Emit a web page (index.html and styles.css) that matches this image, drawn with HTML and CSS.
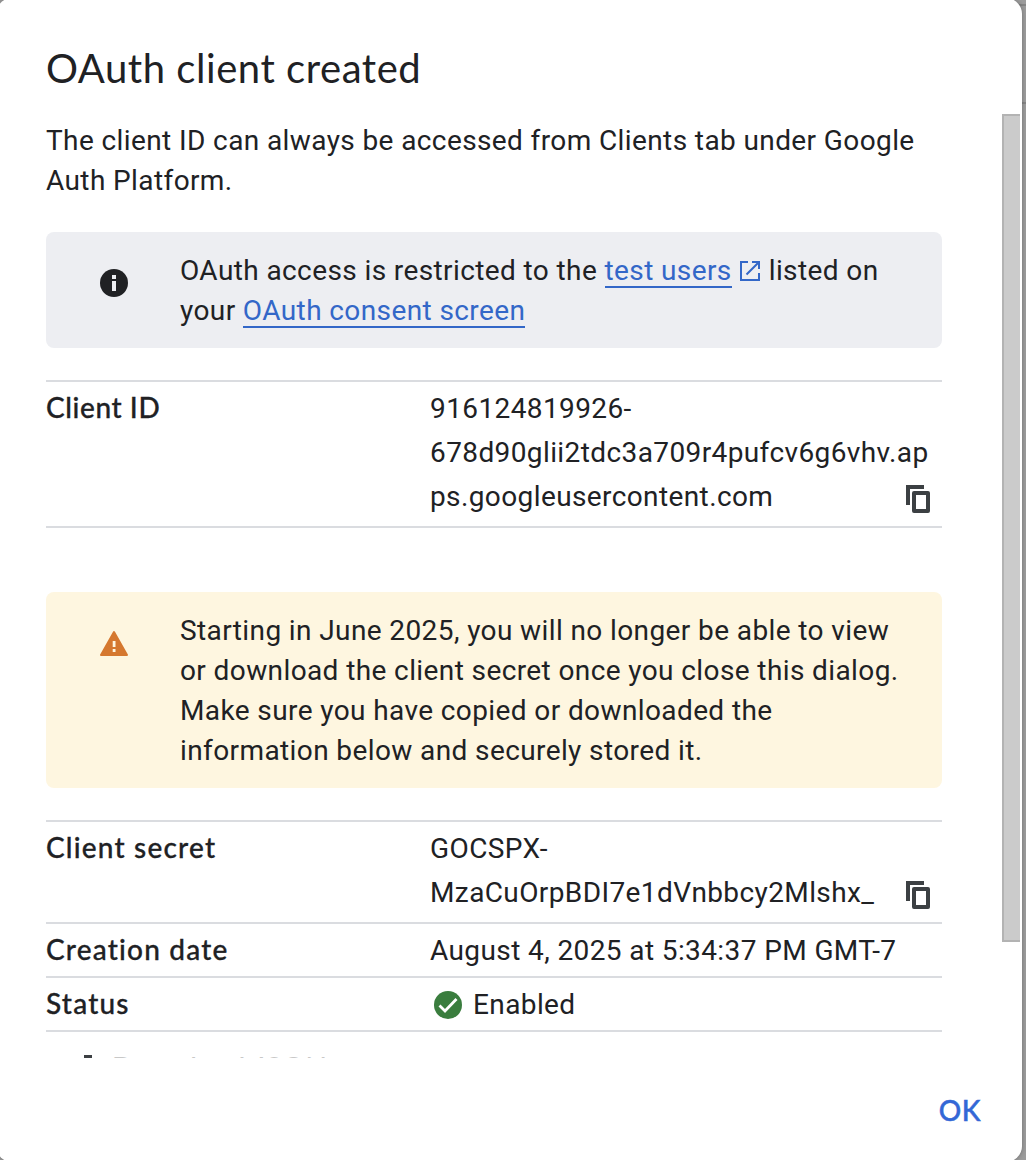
FILE: index.html
```html
<!DOCTYPE html>
<html lang="en">
<head>
<meta charset="utf-8">
<title>OAuth client created</title>
<link rel="stylesheet" href="styles.css">
</head>
<body>
<div class="dialog">
  <h1 class="title">OAuth client created</h1>
  <div class="scroller">
    <div class="content">
      <p class="intro">The client ID can always be accessed from Clients tab under Google<br>Auth Platform.</p>
      <div class="notice info">
        <svg class="notice-icon" viewBox="0 0 28 28"><circle cx="14" cy="14" r="14" fill="#202124"/><path d="M12 6h4v4h-4zM12 12h4v10h-4z" fill="#edeef2"/></svg>
        <p class="notice-text">OAuth access is restricted to the <a class="link">test users</a><svg class="external" viewBox="0 0 20 20" fill="none" stroke="#3367c8" stroke-width="2"><path d="M8 1H1v18h18v-7M12 1h7v7M19 1L6.500 13.500"/></svg>listed on<br>your <a class="link">OAuth consent screen</a></p>
      </div>
      <dl class="details">
        <div class="row">
          <dt class="tight">Client ID</dt>
          <dd>916124819926-<br>678d90glii2tdc3a709r4pufcv6g6vhv.ap<br>ps.googleusercontent.com</dd>
          <svg class="copy" viewBox="0 0 24 28" fill="none" stroke="#3c4043" stroke-width="4"><path d="M18 2H2v18"/><rect x="8" y="8" width="14" height="18" stroke-linejoin="round"/></svg>
        </div>
      </dl>
      <div class="notice warning">
        <svg class="notice-icon" viewBox="0 0 28 28"><path d="M14 3L27 26H1z" fill="#d5782f" stroke="#d5782f" stroke-width="2" stroke-linejoin="round"/><path d="M12.700 12h2.800v6h-2.800zM12.700 20h2.800v3h-2.800z" fill="#fef6e0"/></svg>
        <p class="notice-text">Starting in June 2025, you will no longer be able to view<br>or download the client secret once you close this dialog.<br>Make sure you have copied or downloaded the<br>information below and securely stored it.</p>
      </div>
      <dl class="details">
        <div class="row">
          <dt>Client secret</dt>
          <dd>GOCSPX-<br>MzaCuOrpBDI7e1dVnbbcy2Mlshx_</dd>
          <svg class="copy" viewBox="0 0 24 28" fill="none" stroke="#3c4043" stroke-width="4"><path d="M18 2H2v18"/><rect x="8" y="8" width="14" height="18" stroke-linejoin="round"/></svg>
        </div>
        <div class="row short"><dt>Creation date</dt><dd>August 4, 2025 at 5:34:37 PM GMT-7</dd></div>
        <div class="row short"><dt>Status</dt><dd class="status"><svg class="check" viewBox="0 0 28 28"><circle cx="14" cy="14" r="14" fill="#3a7d3e"/><path d="M5.500 14.500l5.500 5.500L22.500 8" fill="none" stroke="#fff" stroke-width="2.800"/></svg>Enabled</dd></div>
      </dl>
      <div class="download"><svg class="download-icon" viewBox="0 0 24 28"><path d="M8 0h8v10h6L12 20 2 10h6zM2 24h20v4H2z" fill="#3c4043"/></svg><span>Download JSON</span></div>
    </div>
    <div class="scrollbar"><div class="thumb"></div></div>
  </div>
  <div class="actions"><button class="ok">OK</button></div>
</div>
</body>
</html>
```
FILE: styles.css
```css
* { box-sizing: border-box; }
html, body { margin: 0; height: 1160px; overflow: hidden; }
body {
  background: linear-gradient(transparent 4px, #858585 4px 6px, transparent 6px 102px, #858585 102px 104px, transparent 104px), #9c9c9c;
  font: 28px/40px Roboto, "Liberation Sans", sans-serif;
  letter-spacing: 0.395px;
  color: #202124;
}
.dialog {
  width: 1026px;
  height: 1164px;
  margin: -2px 0 0 -4px;
  padding: 2px 0 0 4px;
  background: #fff;
  border-radius: 16px;
  box-shadow: 0 0 4px rgba(0, 0, 0, .3);
  display: flex;
  flex-direction: column;
}
.title {
  height: 114px;
  margin: 0;
  padding: 44px 46px 0;
  font: 400 40px/48px Lato, "Open Sans", sans-serif;
  letter-spacing: 0.55px;
}
.scroller { height: 944px; display: flex; overflow: hidden; }
.content { width: 1002px; padding: 7px 60px 0 46px; flex: none; }
.intro { margin: 0 0 31px; white-space: nowrap; }
.notice {
  display: flex;
  align-items: flex-start;
  border-radius: 8px;
  padding: 19px 0 17px 54px;
}
.info { background: #edeef2; height: 116px; }
.warning { background: #fef6e0; height: 196px; margin-top: 64px; }
.notice-icon { width: 28px; height: 28px; margin-top: 18px; flex: none; }
.notice-text { margin: 0 0 0 52px; white-space: nowrap; }
.link { color: #3367c8; box-shadow: 0 -1px 0 #3367c8 inset, 0 1px 0 #3367c8; }
.external { width: 20px; height: 20px; margin: 0 9px 0 8px; vertical-align: -1px; }
.details { margin: 32px 0 0; border-top: 2px solid #dadce0; }
.row {
  display: flex;
  padding: 5px 0 7px;
  line-height: 44px;
  border-bottom: 2px solid #dadce0;
}
.row dt {
  width: 384px;
  flex: none;
  font-family: Lato, "Open Sans", sans-serif;
  font-weight: 500;
  line-height: 41px;
  letter-spacing: 1.2px;
  -webkit-text-stroke: 0.3px currentColor;
}
.row .tight { letter-spacing: 0.6px; }
.row dd { margin: 0; width: 476px; white-space: nowrap; }
.copy { width: 24px; height: 28px; align-self: flex-end; flex: none; margin-bottom: 6px; }
.short { height: 54px; padding: 5px 0 3px; }
.status { display: flex; align-items: center; }
.check { width: 28px; height: 28px; margin: 0 11px 0 4px; }
.download {
  display: flex;
  align-items: flex-start;
  padding: 23px 0 0 30px;
  gap: 12px;
  font-family: Lato, "Open Sans", sans-serif;
  font-weight: 500;
  line-height: 24px;
  letter-spacing: 0.9px;
  color: #c8c8c8;
}
.download-icon { width: 24px; height: 28px; }
.scrollbar { width: 18px; }
.thumb { height: 828px; background: #cbcbcb; border: 2px solid #b3b3b3; border-right: 0; }
.actions { display: flex; justify-content: flex-end; padding: 28px 41px 0 0; }
.ok {
  border: 0;
  padding: 0;
  background: none;
  color: #3367d6;
  font: 500 28px/49px Lato, "Open Sans", sans-serif;
  letter-spacing: 0.5px;
  -webkit-text-stroke: 0.5px currentColor;
}
```
